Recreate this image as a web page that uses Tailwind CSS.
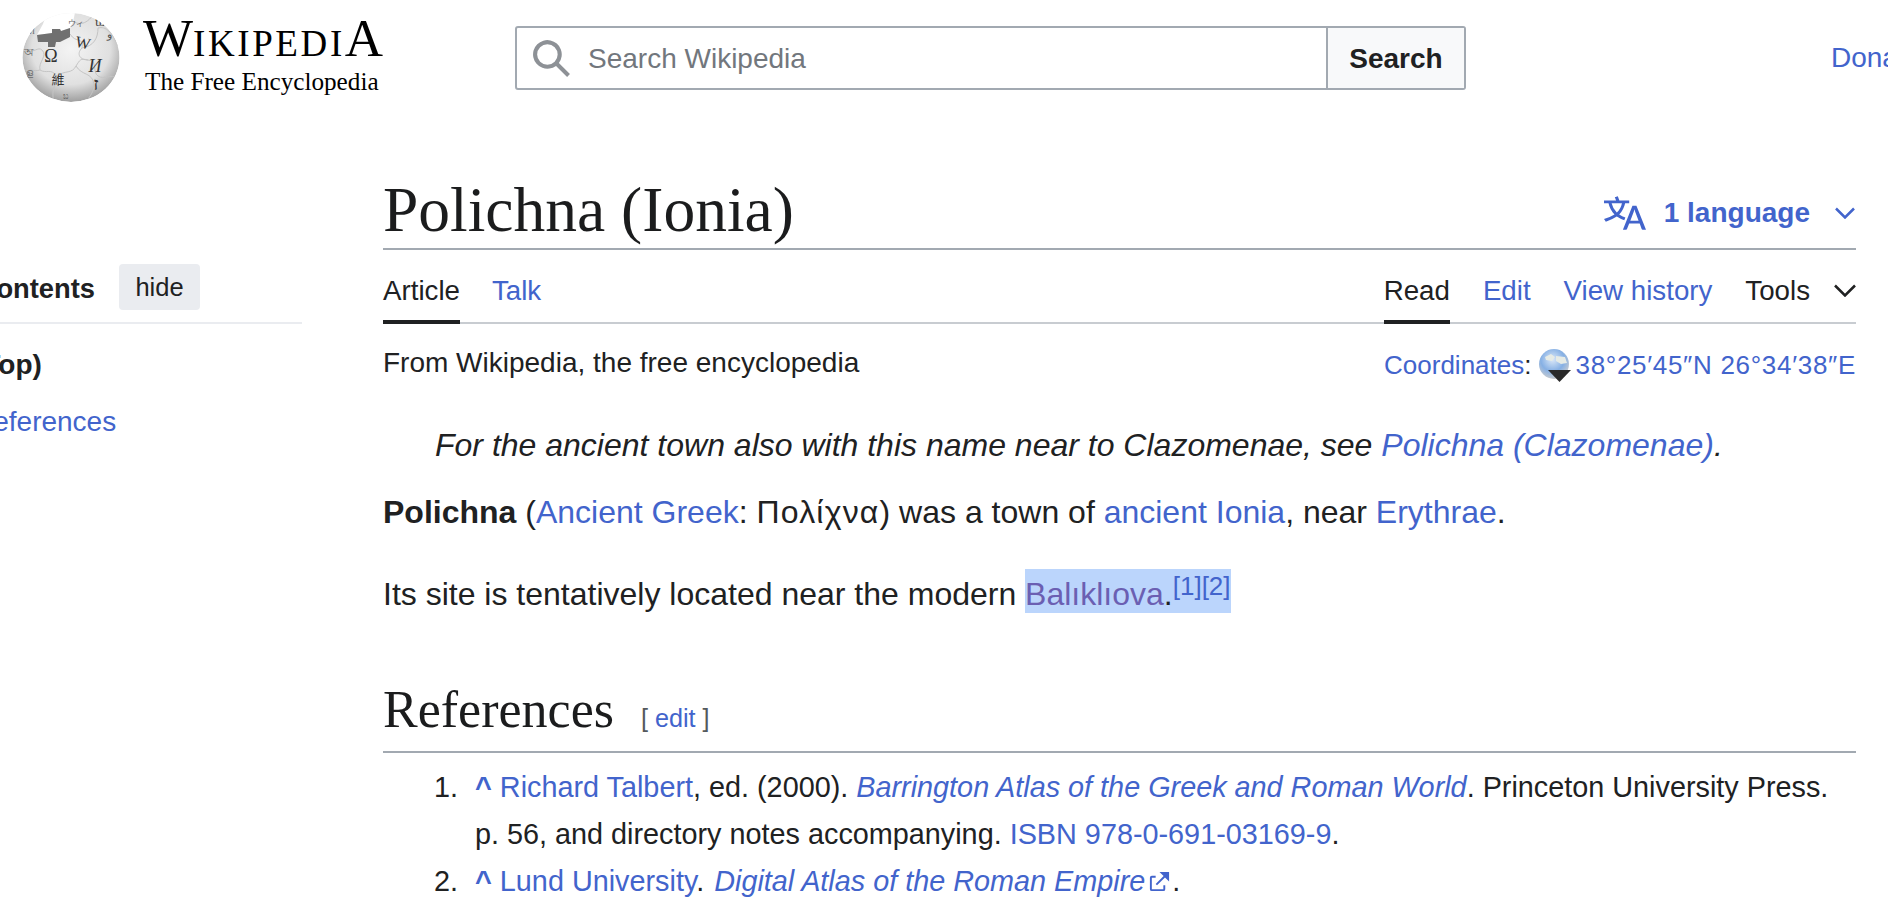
<!DOCTYPE html>
<html lang="en">
  <head>
    <meta charset="UTF-8" />
    <title>Polichna (Ionia) - Wikipedia</title>
    <script src="https://cdn.jsdelivr.net/npm/@tailwindcss/browser@4"></script>
  </head>

  <body class="bg-white h-[922px] overflow-hidden font-['Liberation_Sans',Arial,sans-serif] text-[#202122] text-[32px] leading-[47px]">
    <header class="flex h-[110px] w-[1950px]">
      <svg class="ml-[10px] shrink-0" width="120" height="110" viewBox="0 0 120 110">
        <defs>
          <radialGradient id="globe-shade" cx="50%" cy="40%" r="62%">
            <stop offset="0" stop-color="#f4f4f4" />
            <stop offset="0.65" stop-color="#e0e0e0" />
            <stop offset="1" stop-color="#989898" />
          </radialGradient>
          <clipPath id="globe-clip"><ellipse cx="61" cy="57.5" rx="48.5" ry="44.5" /></clipPath>
        </defs>
        <g clip-path="url(#globe-clip)">
          <ellipse cx="61" cy="57.5" rx="48.5" ry="44.5" fill="url(#globe-shade)" />
          <g fill="none" stroke="#c4c4c4" stroke-width="1">
            <path d="M14 50 C24 54 28 46 32 50 C38 56 28 62 30 70 C36 74 42 68 46 76 C48 84 40 88 44 102" />
            <path d="M60 34 C66 44 74 36 72 48 C66 54 70 60 78 60 C88 60 82 72 88 76 C94 80 100 74 108 78" />
            <path d="M46 76 C56 70 62 74 66 66 C70 60 70 58 78 60" />
            <path d="M72 48 C84 46 88 38 88 28 C96 26 102 32 108 46" />
            <path d="M64 22 C72 26 78 22 84 14" />
            <path d="M66 66 C72 76 82 72 84 84 C84 92 80 96 76 102" />
            <path d="M30 70 C24 72 20 68 13 72" />
          </g>
          <path d="M38 8 L66 8 L63 22 L60 28 L51 31 L50 29 L42 29 L42 33 L27 35 L33 24 Z" fill="#fff" />
          <path d="M27 35 L42 33 L42 29 L50 29 L51 31 L60 28 L60 37 L50 42 L46 42 L45 47 L38 47 L38 42 L28 42 Z" fill="#707070" />
          <g fill="#333" font-family="'Liberation Serif',serif" text-anchor="middle">
            <text x="41" y="62" font-size="18">Ω</text>
            <text x="72" y="48" font-size="16" transform="rotate(12 72 48)">W</text>
            <text x="85" y="72" font-size="18" font-style="italic">И</text>
            <text x="86" y="90" font-size="18" font-weight="bold">ז</text>
            <text x="48" y="84" font-size="13" font-family="'Noto Sans CJK TC',sans-serif">維</text>
            <text x="66" y="26" font-size="8" fill="#666" font-family="'Noto Sans CJK JP',sans-serif">ウィ</text>
            <text x="90" y="26" font-size="11">ឃ</text>
            <text x="99" y="38" font-size="11" fill="#555">و</text>
            <text x="19" y="56" font-size="11" fill="#666">অ</text>
            <text x="19" y="76" font-size="10" fill="#777">ള</text>
            <text x="55" y="99" font-size="8" fill="#666">ಬ</text>
            <text x="22" y="34" font-size="8" fill="#666">И</text>
          </g>
        </g>
      </svg>
      <div class="ml-[13px] mt-[12px] shrink-0 w-[372px] font-['Liberation_Serif',serif] text-black">
        <div class="uppercase leading-[52px] text-[53px] whitespace-nowrap">W<span class="text-[37px] tracking-[2.6px]">ikipedi</span>A</div>
        <div class="ml-[2px] -mt-[3px] leading-[30px] text-[25.2px] whitespace-nowrap">The Free Encyclopedia</div>
      </div>
      <div class="mt-[26px] flex h-[64px] w-[951px] shrink-0 rounded-[3px] border-2 border-[#a2a9b1]">
        <div class="flex flex-1 items-center gap-[16px] pl-[14px]">
          <svg width="41" height="41" viewBox="0 0 20 20" fill="#8d9196"><path d="M12.2 13.6a7 7 0 1 1 1.4-1.4l5.4 5.4-1.4 1.4zM3 8a5 5 0 1 0 10 0A5 5 0 0 0 3 8" /></svg>
          <span class="text-[#72777d] text-[28px]">Search Wikipedia</span>
        </div>
        <div class="flex w-[138px] items-center justify-center border-l-2 border-[#a2a9b1] bg-[#f8f9fa] font-bold text-[28px]">Search</div>
      </div>
      <a class="ml-[365px] mt-[34px] shrink-0 whitespace-nowrap text-[#4264cc] text-[28px]">Donate</a>
    </header>

    <div class="flex">
      <aside class="w-[302px] shrink-0 overflow-hidden pt-[154px]">
        <div class="flex h-[60px] items-start justify-end gap-[24px] border-b-2 border-[#eaecf0] pr-[102px]">
          <span class="mt-[1px] font-bold text-[27.3px] whitespace-nowrap">Contents</span>
          <span class="h-[46px] w-[81px] shrink-0 rounded-[4px] bg-[#eaecf0] text-center text-[25.5px] leading-[46px]">hide</span>
        </div>
        <div class="-ml-[26px] mt-[17px] font-bold text-[28px] whitespace-nowrap">(Top)</div>
        <div class="-ml-[27px] mt-[10px] text-[#4264cc] text-[28px] whitespace-nowrap">References</div>
      </aside>

      <main class="ml-[81px] w-[1473px] shrink-0">
        <div class="flex h-[140px] items-end justify-between border-b-2 border-[#a2a9b1]">
          <h1 class="font-['Liberation_Serif',serif] text-[#1b1c1d] text-[63.5px] leading-[76px]">Polichna (Ionia)</h1>
          <div class="flex items-center pb-[12px] pr-[1px] text-[#4264cc]">
            <svg width="42" height="42" viewBox="0 0 20 20" fill="#4264cc"><path d="M20 18h-1.44a.6.6 0 0 1-.4-.12.8.8 0 0 1-.23-.31L17 15h-5l-1 2.54a.8.8 0 0 1-.22.3.6.6 0 0 1-.4.14H9l4.55-11.47h1.89zm-3.53-4.31L14.89 9.5a12 12 0 0 1-.39-1.24q-.09.37-.19.69l-.19.56-1.58 4.19zm-6.3-1.58a13.4 13.4 0 0 1-2.91-1.41 11.46 11.46 0 0 0 2.81-5.37H12V4H7.31a4 4 0 0 0-.2-.56C6.87 2.79 6.6 2 6.6 2l-1.47.5s.4.89.6 1.5H0v1.33h2.15A11.23 11.23 0 0 0 5 10.7a17.2 17.2 0 0 1-5 2.1q.56.82.87 1.38a23.3 23.3 0 0 0 5.22-2.51 15.6 15.6 0 0 0 3.56 1.77zM3.63 5.33h4.91a8.1 8.1 0 0 1-2.45 4.45 9.1 9.1 0 0 1-2.46-4.45" /></svg>
            <span class="ml-[18px] font-bold text-[28px]">1 language</span>
            <svg class="ml-[25px]" width="20" height="12" viewBox="0 0 20 12" fill="none" stroke="#4264cc" stroke-width="2.5"><path d="M1 1.5l9 9 9-9" /></svg>
          </div>
        </div>

        <div class="flex h-[74px] items-stretch justify-between border-b-2 border-[#c8ccd1] text-[27.7px]">
          <div class="flex gap-[32px]">
            <a class="-mb-[2px] flex h-[74px] items-center border-b-4 border-[#202122] pt-[10px]">Article</a>
            <a class="flex h-[70px] items-center pt-[10px] text-[#4264cc]">Talk</a>
          </div>
          <div class="flex gap-[33px]">
            <a class="-mb-[2px] flex h-[74px] items-center border-b-4 border-[#202122] pt-[10px]">Read</a>
            <a class="flex h-[70px] items-center pt-[10px] text-[#4264cc]">Edit</a>
            <a class="flex h-[70px] items-center pt-[10px] text-[#4264cc]">View history</a>
            <a class="flex h-[70px] items-center pt-[10px]">Tools</a>
            <span class="-ml-[9px] flex h-[70px] items-center pt-[10px]">
              <svg width="22" height="13" viewBox="0 0 22 13" fill="none" stroke="#202122" stroke-width="2.5"><path d="M1 1.5l10 10 10-10" /></svg>
            </span>
          </div>
        </div>

        <div class="flex h-[80px] items-center justify-between">
          <span class="pb-[3px] text-[28px]">From Wikipedia, the free encyclopedia</span>
          <span class="flex items-center pt-[2px] text-[26px] text-[#4264cc]">
            Coordinates<span class="text-[#202122]">:</span>
            <svg class="ml-[7px] mr-[3px]" width="34" height="34" viewBox="0 0 34 34">
              <defs>
                <radialGradient id="earth" cx="45%" cy="35%" r="65%">
                  <stop offset="0" stop-color="#dbe8f8" />
                  <stop offset="0.6" stop-color="#86b0e4" />
                  <stop offset="1" stop-color="#c8cbcf" />
                </radialGradient>
              </defs>
              <circle cx="16" cy="16" r="15" fill="url(#earth)" />
              <path d="M7 9l6-3 4 3-3 4-6-1zM18 8l9 1 2 6-6 1-5-3z" fill="#e6ebe6" />
              <path d="M10 22h23l-11.500 12z" fill="#2a2a2a" />
            </svg>
            <span class="tracking-[0.7px]">38°25′45″N 26°34′38″E</span>
          </span>
        </div>

        <div class="ml-[52px] mt-[18px] italic">For the ancient town also with this name near to Clazomenae, see <a class="text-[#4264cc]">Polichna (Clazomenae)</a>.</div>

        <p class="mt-[20px]"><b>Polichna</b> (<a class="text-[#4264cc]">Ancient Greek</a>: <span class="tracking-[1.2px]">Πολίχνα</span>) was a town of <a class="text-[#4264cc]">ancient Ionia</a>, near <a class="text-[#4264cc]">Erythrae</a>.</p>

        <p class="mt-[35px]">Its site is tentatively located near the modern <span class="relative -top-[2px] inline-block h-[44px] bg-[#bbd5fc] align-top leading-[50px]"><a class="text-[#6b5fb2]">Balıklıova</a>.<sup class="relative top-[2px] text-[26px] leading-none align-super text-[#4264cc]">[1][2]</sup></span></p>

        <div class="mt-[59px] flex h-[76px] items-baseline gap-[27px] border-b-2 border-[#a2a9b1] pt-[3px]">
          <h2 class="font-['Liberation_Serif',serif] text-[#1b1c1d] text-[52px] leading-[60px]">References</h2>
          <span class="text-[#54595d] text-[25.2px]">[ <a class="text-[#4264cc]">edit</a> ]</span>
        </div>

        <ol class="ml-[52px] mt-[11px] text-[28.8px]">
          <li class="relative pl-[40px]">
            <span class="absolute -left-[1px]">1.</span>
            <b class="text-[#4264cc]">^</b> <a class="text-[#4264cc]">Richard Talbert</a>, ed. (2000). <a class="italic text-[#4264cc]">Barrington Atlas of the Greek and Roman World</a>. Princeton University Press. p. 56, and directory notes accompanying. <a class="text-[#4264cc]">ISBN 978-0-691-03169-9</a>.
          </li>
          <li class="relative pl-[40px]">
            <span class="absolute -left-[1px]">2.</span>
            <b class="text-[#4264cc]">^</b> <a class="text-[#4264cc]">Lund University</a>. <a class="ml-[2px] italic text-[#4264cc]">Digital Atlas of the Roman Empire</a><svg class="ml-[3px] mr-[1px] inline-block align-[-2px]" width="23" height="23" viewBox="0 0 12 12" fill="#4264cc"><path d="M6 1h5v5L8.860 3.850 4.700 8 4 7.300l4.150-4.160zM2 3h2v1H2v6h6V8h1v2a1 1 0 0 1-1 1H2a1 1 0 0 1-1-1V4a1 1 0 0 1 1-1" /></svg>.
          </li>
        </ol>
      </main>
    </div>
  </body>
</html>
